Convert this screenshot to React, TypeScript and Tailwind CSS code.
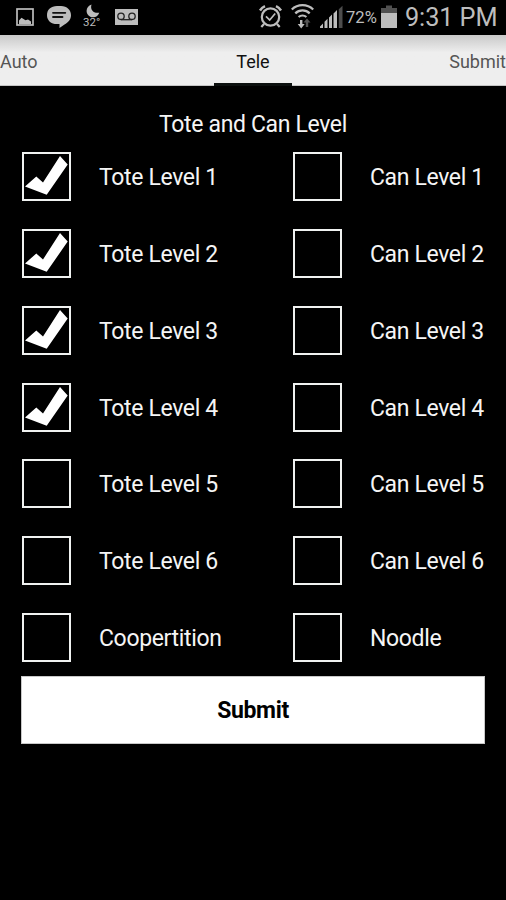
import React, { useState } from 'react';

const rows = [
  ['Tote Level 1', 'Can Level 1'],
  ['Tote Level 2', 'Can Level 2'],
  ['Tote Level 3', 'Can Level 3'],
  ['Tote Level 4', 'Can Level 4'],
  ['Tote Level 5', 'Can Level 5'],
  ['Tote Level 6', 'Can Level 6'],
  ['Coopertition', 'Noodle'],
];

const StatusBar: React.FC = () => (
  <header className="flex h-[35px] shrink-0 items-start bg-black text-[#bdbdbd]">
    {/* Notifications */}
    <svg className="h-[35px] w-[150px] shrink-0" viewBox="0 0 150 35" aria-hidden="true">
      <rect x="17" y="9" width="16" height="16" fill="none" stroke="#bdbdbd" strokeWidth="1.7" />
      <path d="M19 24v-3.500l2.500-2.700 2 1.200 2 1.200 2.500-.8 3 2.100v2.500z" fill="#bdbdbd" />
      <path d="M57 6h4c6 0 10 4 10 9.2 0 4.2-2.800 7.300-6.500 9.300l-5 3.500v-4H57c-6 0-10-3.500-10-8.800C47 9.500 51 6 57 6z" fill="#bdbdbd" />
      <path d="M53 12.800h12.300M53 17h9.500" stroke="#111" strokeWidth="1.800" strokeLinecap="round" />
      <path d="M91.500 4.500c-1.500 5 1.500 9 7.800 8.200-1.300 3.200-3.800 4.900-6.500 4.600-3.600-.3-6.300-3-6.200-6.600.1-2.800 1.900-5.200 4.900-6.200z" fill="#bdbdbd" />
      <text x="83" y="26" fontSize="11.500" fill="#bdbdbd" fontFamily="Roboto, sans-serif">32°</text>
      <rect x="115" y="9" width="23" height="16" fill="#bdbdbd" />
      <g fill="none" stroke="#222" strokeWidth="1.300">
        <circle cx="121" cy="16.300" r="3.200" />
        <circle cx="132" cy="16.300" r="3.200" />
        <path d="M121 19.700h11" />
      </g>
    </svg>
    <div className="grow" />
    {/* Alarm, wifi and signal */}
    <svg className="h-[35px] w-[90px] shrink-0" viewBox="256 0 90 35" aria-hidden="true">
      <g fill="none" stroke="#bdbdbd">
        <circle cx="270.500" cy="17" r="8.700" strokeWidth="2.200" />
        <path d="M266 16.300l3.700 3.700 5.500-6.500" strokeWidth="1.700" />
        <path d="M260 10.500a12 12 0 0 1 5-4.300M276 6.200a12 12 0 0 1 5 4.300" strokeWidth="2.500" />
        <path d="M264 24l-2.700 3M277 24l2.700 3" strokeWidth="2.200" />
        <path d="M291.800 9.500a15.500 15.500 0 0 1 21.400 0" strokeWidth="2.300" />
        <path d="M295.300 13.300a10.400 10.400 0 0 1 14.400 0" strokeWidth="2.300" />
        <path d="M298.600 17a5.800 5.800 0 0 1 7.800 0" strokeWidth="2.200" />
      </g>
      <path d="M300 20h2.400v4h2.300l-3.500 4.500-3.500-4.500h2.300z" fill="#bdbdbd" />
      <path d="M307 18.500l3.500 4H308.200v4.500h-2.400v-4.500h-2.300z" fill="#555" />
      <path d="M320 28v-1.500l3-3V28zM324.500 28v-6.300l3-3V28zM329 28V17.500l3-3V28zM333.500 28V13.500l3.500-3.500V28z" fill="#bdbdbd" />
      <path d="M338.800 28V9.200l3.700-3.500V28z" fill="#4d4d4d" />
    </svg>
    <span className="mt-[6px] w-[35px] shrink-0 whitespace-nowrap text-[16.6px] leading-[24px]">72%</span>
    <svg className="h-[35px] w-4 shrink-0" viewBox="0 0 16 35" aria-hidden="true">
      <path d="M5 5.500h6V8h5v6H0V8h5z" fill="#505050" />
      <rect y="13" width="16" height="15" fill="#bdbdbd" />
    </svg>
    <span className="ml-[8px] mt-[3px] w-[101px] shrink-0 whitespace-nowrap text-[25.300px] leading-[30px] tracking-[-0.1px]">9:31 PM</span>
  </header>
);

const Tabs: React.FC = () => (
  <nav className="flex h-[51px] shrink-0 justify-between border-b border-[#c4c4c4] bg-linear-to-b from-[#c9c9c9] from-0% via-[#eeeeee] via-35% to-[#eeeeee] text-[18px] leading-[53px] text-[#555]">
    <button className="w-[78px] text-left">Auto</button>
    <button className="relative w-[78px] text-center text-[#111]">
      Tele
      <span className="absolute inset-x-0 -bottom-px h-[3px] bg-[#0c100f]" />
    </button>
    <button className="w-[78px] text-right">Submit</button>
  </nav>
);

type CheckItemProps = {
  label: string;
  checked: boolean;
  onToggle: () => void;
};

const CheckItem: React.FC<CheckItemProps> = ({ label, checked, onToggle }) => (
  <button
    role="checkbox"
    aria-checked={checked}
    onClick={onToggle}
    className="flex h-[49px] items-center gap-[28px] text-left"
  >
    <span className="h-[49px] w-[49px] shrink-0 border-2 border-[#f0f2f1]">
      {checked && (
        <svg className="h-[45px] w-[45px]" viewBox="2 2 45 45" aria-hidden="true">
          <path d="M3 34.500L14.300 24.500L21 30.500L38 4L45.700 12.500L24.700 42.800Z" fill="#fff" />
        </svg>
      )}
    </span>
    <span className="whitespace-nowrap pt-[3.500px]">{label}</span>
  </button>
);

const App: React.FC = () => {
  const [checked, setChecked] = useState<string[]>([
    'Tote Level 1',
    'Tote Level 2',
    'Tote Level 3',
    'Tote Level 4',
  ]);

  const toggle = (label: string) => {
    setChecked((prev) =>
      prev.includes(label) ? prev.filter((item) => item !== label) : [...prev, label]
    );
  };

  return (
    <div className="flex h-[900px] w-[506px] flex-col overflow-hidden bg-black font-['Roboto',sans-serif]">
      <StatusBar />
      <Tabs />
      <main className="flex flex-col px-[21px] pt-[23px] text-[23px] tracking-[-0.35px] text-[#f5f5f5]">
        <h1 className="text-center leading-[32px]">Tote and Can Level</h1>

        {/* Two columns of options */}
        <div className="mt-[11px] flex flex-col gap-[27.870px] pl-px">
          {rows.map((row) => (
            <div key={row[0]} className="grid grid-cols-[271px_1fr]">
              {row.map((label) => (
                <CheckItem
                  key={label}
                  label={label}
                  checked={checked.includes(label)}
                  onToggle={() => toggle(label)}
                />
              ))}
            </div>
          ))}
        </div>

        <button className="mt-[13.800px] h-[68px] border border-[#c8c8c8] bg-white pt-[3px] font-bold text-black">
          Submit
        </button>
      </main>
    </div>
  );
};

export default App;
